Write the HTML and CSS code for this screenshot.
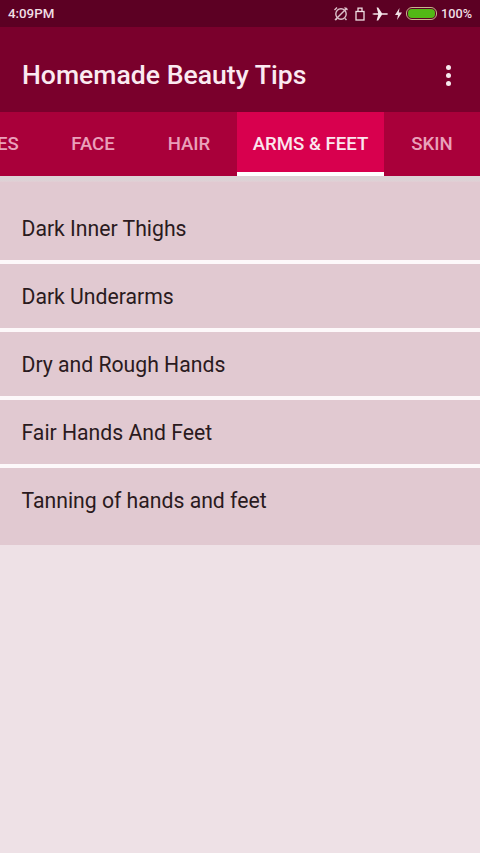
FILE: index.html
```html
<!DOCTYPE html>
<html lang="en">
<head>
<meta charset="utf-8">
<title>Homemade Beauty Tips</title>
<link rel="stylesheet" href="styles.css">
</head>
<body>
<div class="status">
  <span class="time">4:09PM</span>
  <div class="status-icons">
    <svg class="ic-alarm" width="16" height="16" viewBox="0 0 16 16" fill="none" stroke="#dcc0ca" stroke-width="1.4"><path d="M4 12.500 2.500 14M12 12.500 13.500 14"/><circle cx="8" cy="8" r="5.200"/><path d="M2 14 14 2"/><path d="M1.500 4 4 1.500M11.500 1.500 14.500 4"/></svg>
    <svg class="ic-lock" width="10" height="14" viewBox="0 0 10 14" fill="none" stroke="#f0dfe4" stroke-width="1.300"><rect x="1" y="4.500" width="8" height="8.500"/><path d="M3 4.500V1.200H7V4.500"/></svg>
    <svg class="ic-plane" width="16" height="14" viewBox="0 0 16 14" fill="#f5e8ec"><path d="M0 7 2 6.200H6.200L4.600 .6H6.200L10 6.200H14C15.400 6.200 16 6.600 16 7S15.400 7.800 14 7.800H10L6.200 13.400H4.600L6.200 7.800H2Z"/></svg>
    <svg class="ic-bolt" width="7" height="12" viewBox="0 0 7 12" fill="#f0dfe4"><path d="M4.500 0 0 7H3L2 12 7 4.500H3.800Z"/></svg>
    <div class="battery"><div class="battery-fill"></div></div>
    <span class="pct">100%</span>
  </div>
</div>
<header class="appbar">
  <h1 class="title">Homemade Beauty Tips</h1>
  <div class="menu"><i class="dot"></i><i class="dot"></i><i class="dot"></i></div>
</header>
<nav class="tabs">
  <div class="tab">EYES</div>
  <div class="tab">FACE</div>
  <div class="tab">HAIR</div>
  <div class="tab active">ARMS &amp; FEET</div>
  <div class="tab">SKIN</div>
</nav>
<div class="shadow"></div>
<ul class="list">
  <li class="row first">Dark Inner Thighs</li>
  <li class="row">Dark Underarms</li>
  <li class="row">Dry and Rough Hands</li>
  <li class="row">Fair Hands And Feet</li>
  <li class="row last">Tanning of hands and feet</li>
</ul>
</body>
</html>
```
FILE: styles.css
```css
* { box-sizing: border-box; }
html, body { margin: 0; padding: 0; }
body {
  width: 480px;
  height: 853px;
  overflow: hidden;
  background: #eee1e6;
  font-family: Roboto, sans-serif;
}
.status {
  height: 27px;
  background: #5c0023;
  display: flex;
  align-items: center;
  justify-content: space-between;
  padding: 0 8px;
  color: #f0dfe4;
  font-weight: 500;
}
.time { font-size: 13.300px; }
.pct { font-size: 12.700px; }
.status-icons { display: flex; align-items: center; }
.ic-alarm { margin-right: 6px; }
.ic-lock { margin-right: 7px; }
.ic-plane { margin-right: 7px; }
.ic-bolt { margin-right: 4px; }
.battery {
  width: 31px;
  height: 13px;
  border: 1px solid #c8b48c;
  border-radius: 6px;
  padding: 1px;
  margin-right: 4px;
}
.battery-fill { height: 100%; background: #52b815; border-radius: 4px; }
.appbar {
  height: 85px;
  background: #7a002c;
  display: flex;
  align-items: center;
  justify-content: space-between;
  padding: 9px 29px 0 22px;
}
.title {
  margin: 0;
  font-size: 26.600px;
  font-weight: 500;
  color: #fbeaf1;
}
.menu { display: flex; flex-direction: column; gap: 3px; padding-top: 2px; }
.dot { display: block; width: 5px; height: 5px; border-radius: 50%; background: #f7e9ee; }
.tabs {
  height: 64px;
  background: #a9003a;
  display: flex;
  margin-left: -51px;
  width: 531px;
  overflow: hidden;
}
.tab {
  width: 96px;
  flex: none;
  display: flex;
  align-items: center;
  justify-content: center;
  padding-top: 4px;
  font-size: 18.600px;
  font-weight: 500;
  color: #eaa0ba;
  border-bottom: 4px solid transparent;
}
.tab.active {
  width: 147px;
  background: #d8004e;
  color: #fbe6ee;
  border-bottom-color: #ffffff;
}
.shadow {
  height: 6px;
  background: linear-gradient(#dcd3d6 65%, #e2cdd4);
}
.list { list-style: none; margin: 0; padding: 0; }
.row {
  height: 64px;
  background: #e1c9d1;
  display: flex;
  align-items: center;
  padding: 0 0 0 21.500px;
  font-size: 21.200px;
  color: #2a1a20;
  margin-bottom: 4px;
  box-shadow: 0 4px 0 #fdf8fa;
}
.row.first { height: 78px; padding-top: 14px; }
.row.last { height: 77px; padding-bottom: 13px; margin-bottom: 0; box-shadow: none; }
```
